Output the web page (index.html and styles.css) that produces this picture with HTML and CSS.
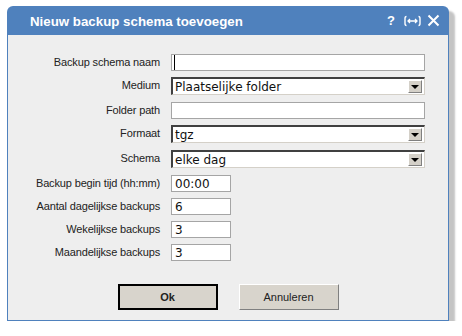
FILE: index.html
```html
<!DOCTYPE html>
<html>
<head>
    <title>Nieuw backup schema toevoegen</title>
    <link rel="stylesheet" href="styles.css">
</head>
<body>
    <div class="dialog">
        <div class="titlebar">
            <span class="title">Nieuw backup schema toevoegen</span>
            <span class="tools">
                <span class="help">?</span>
                <svg class="tool-icon" width="17" height="12" viewBox="0 0 17 12">
                    <path d="M2.5 1.5 Q1 1.5 1 3.5 V8.5 Q1 10.5 2.5 10.5 M14.5 1.5 Q16 1.5 16 3.5 V8.5 Q16 10.5 14.5 10.5" fill="none" stroke="#fff" stroke-width="1.4"/>
                    <path d="M4 6 H13 M6 4 L4 6 L6 8 M11 4 L13 6 L11 8" fill="none" stroke="#fff" stroke-width="1.3"/>
                </svg>
                <svg class="tool-icon" width="13" height="13" viewBox="0 0 13 13">
                    <path d="M1.5 1.5 L11.5 11.5 M11.5 1.5 L1.5 11.5" stroke="#fff" stroke-width="2"/>
                </svg>
            </span>
        </div>

        <div class="content">
            <form class="form">
                <label>Backup schema naam</label>
                <input type="text" class="field wide caret">

                <label>Medium</label>
                <div class="select wide"><span>Plaatselijke folder</span><i class="arrow"></i></div>

                <label>Folder path</label>
                <input type="text" class="field wide">

                <label>Formaat</label>
                <div class="select wide"><span>tgz</span><i class="arrow"></i></div>

                <label>Schema</label>
                <div class="select wide"><span>elke dag</span><i class="arrow"></i></div>

                <label>Backup begin tijd (hh:mm)</label>
                <input type="text" class="field small" value="00:00">

                <label>Aantal dagelijkse backups</label>
                <input type="text" class="field small" value="6">

                <label>Wekelijkse backups</label>
                <input type="text" class="field small" value="3">

                <label>Maandelijkse backups</label>
                <input type="text" class="field small" value="3">
            </form>

            <div class="buttons">
                <button class="btn ok">Ok</button>
                <button class="btn">Annuleren</button>
            </div>
        </div>
    </div>
</body>
</html>
```

FILE: styles.css
```css
/* page */
body {
    margin: 0;
    background-color: #fff;
    font-family: "Liberation Sans", Arial, sans-serif;
}

/* dialog box */
.dialog {
    width: 442px;
    margin: 6px 0 0 7px;
    border-radius: 6px 6px 0 0;
    box-shadow: 6px 5px 2px #c4c4c4;
}

.titlebar {
    height: 29px;
    background-color: #4f81bd;
    border-radius: 6px 6px 0 0;
    display: flex;
    align-items: center;
    justify-content: space-between;
    padding: 0 9px 0 23px;
    color: #fff;
}

.title {
    font-size: 13.3px;
    font-weight: bold;
    margin-top: 1px;
}

.tools {
    display: flex;
    align-items: center;
    gap: 6px;
}

.help {
    font-size: 13px;
    font-weight: bold;
    margin-right: 3px;
}

.content {
    background-color: #eeeeee;
    border: 1px solid #4f81bd;
    border-top: none;
    padding: 19px 0 10px 0;
}

/* form rows */
.form {
    display: grid;
    grid-template-columns: 152px 1fr;
    grid-template-rows: 23px 25px 23px 25px 25px 23px 23px 23px 23px;
    column-gap: 11px;
    align-items: start;
    margin: 0;
}

.form label {
    text-align: right;
    font-size: 11px;
    letter-spacing: -0.15px;
    color: #222;
    line-height: 17px;
}

.field {
    box-sizing: border-box;
    height: 17px;
    border: 1px solid #a5a5a5;
    background-color: #fff;
    padding: 0 3px;
    font-family: "DejaVu Sans", Verdana, sans-serif;
    font-size: 12px;
    color: #111;
    margin: 0;
}

.wide { width: 254px; }
.small { width: 60px; }

.caret {
    box-shadow: inset 2px 0 0 #fff, inset 3px 0 0 #000;
}

/* dropdown */
.select {
    box-sizing: border-box;
    height: 18px;
    background-color: #fff;
    border-top: 2px solid #404040;
    border-left: 2px solid #404040;
    border-right: 1px solid #d4d0c8;
    border-bottom: 1px solid #d4d0c8;
    display: flex;
    align-items: center;
    justify-content: space-between;
    font-family: "DejaVu Sans", Verdana, sans-serif;
    font-size: 12px;
    color: #111;
    padding-left: 2px;
}

.arrow {
    width: 14px;
    height: 13px;
    margin-right: 2px;
    background-color: #d4d0c8;
    border-top: 1px solid #fff;
    border-left: 1px solid #fff;
    border-right: 1px solid #808080;
    border-bottom: 1px solid #808080;
    box-sizing: border-box;
    display: flex;
    align-items: center;
    justify-content: center;
}

.arrow::after {
    content: "";
    border-left: 4px solid transparent;
    border-right: 4px solid transparent;
    border-top: 4px solid #000;
}

/* buttons */
.buttons {
    display: flex;
    justify-content: center;
    gap: 21px;
    margin-top: 17px;
}

.btn {
    box-sizing: border-box;
    width: 100px;
    height: 26px;
    background-color: #d8d4cc;
    border-top: 1px solid #fff;
    border-left: 1px solid #fff;
    border-right: 1px solid #808080;
    border-bottom: 1px solid #808080;
    font-family: "Liberation Sans", Arial, sans-serif;
    font-size: 11px;
    color: #222;
    padding: 0;
}

.ok {
    border: 2px solid #000;
    font-weight: bold;
}
```
